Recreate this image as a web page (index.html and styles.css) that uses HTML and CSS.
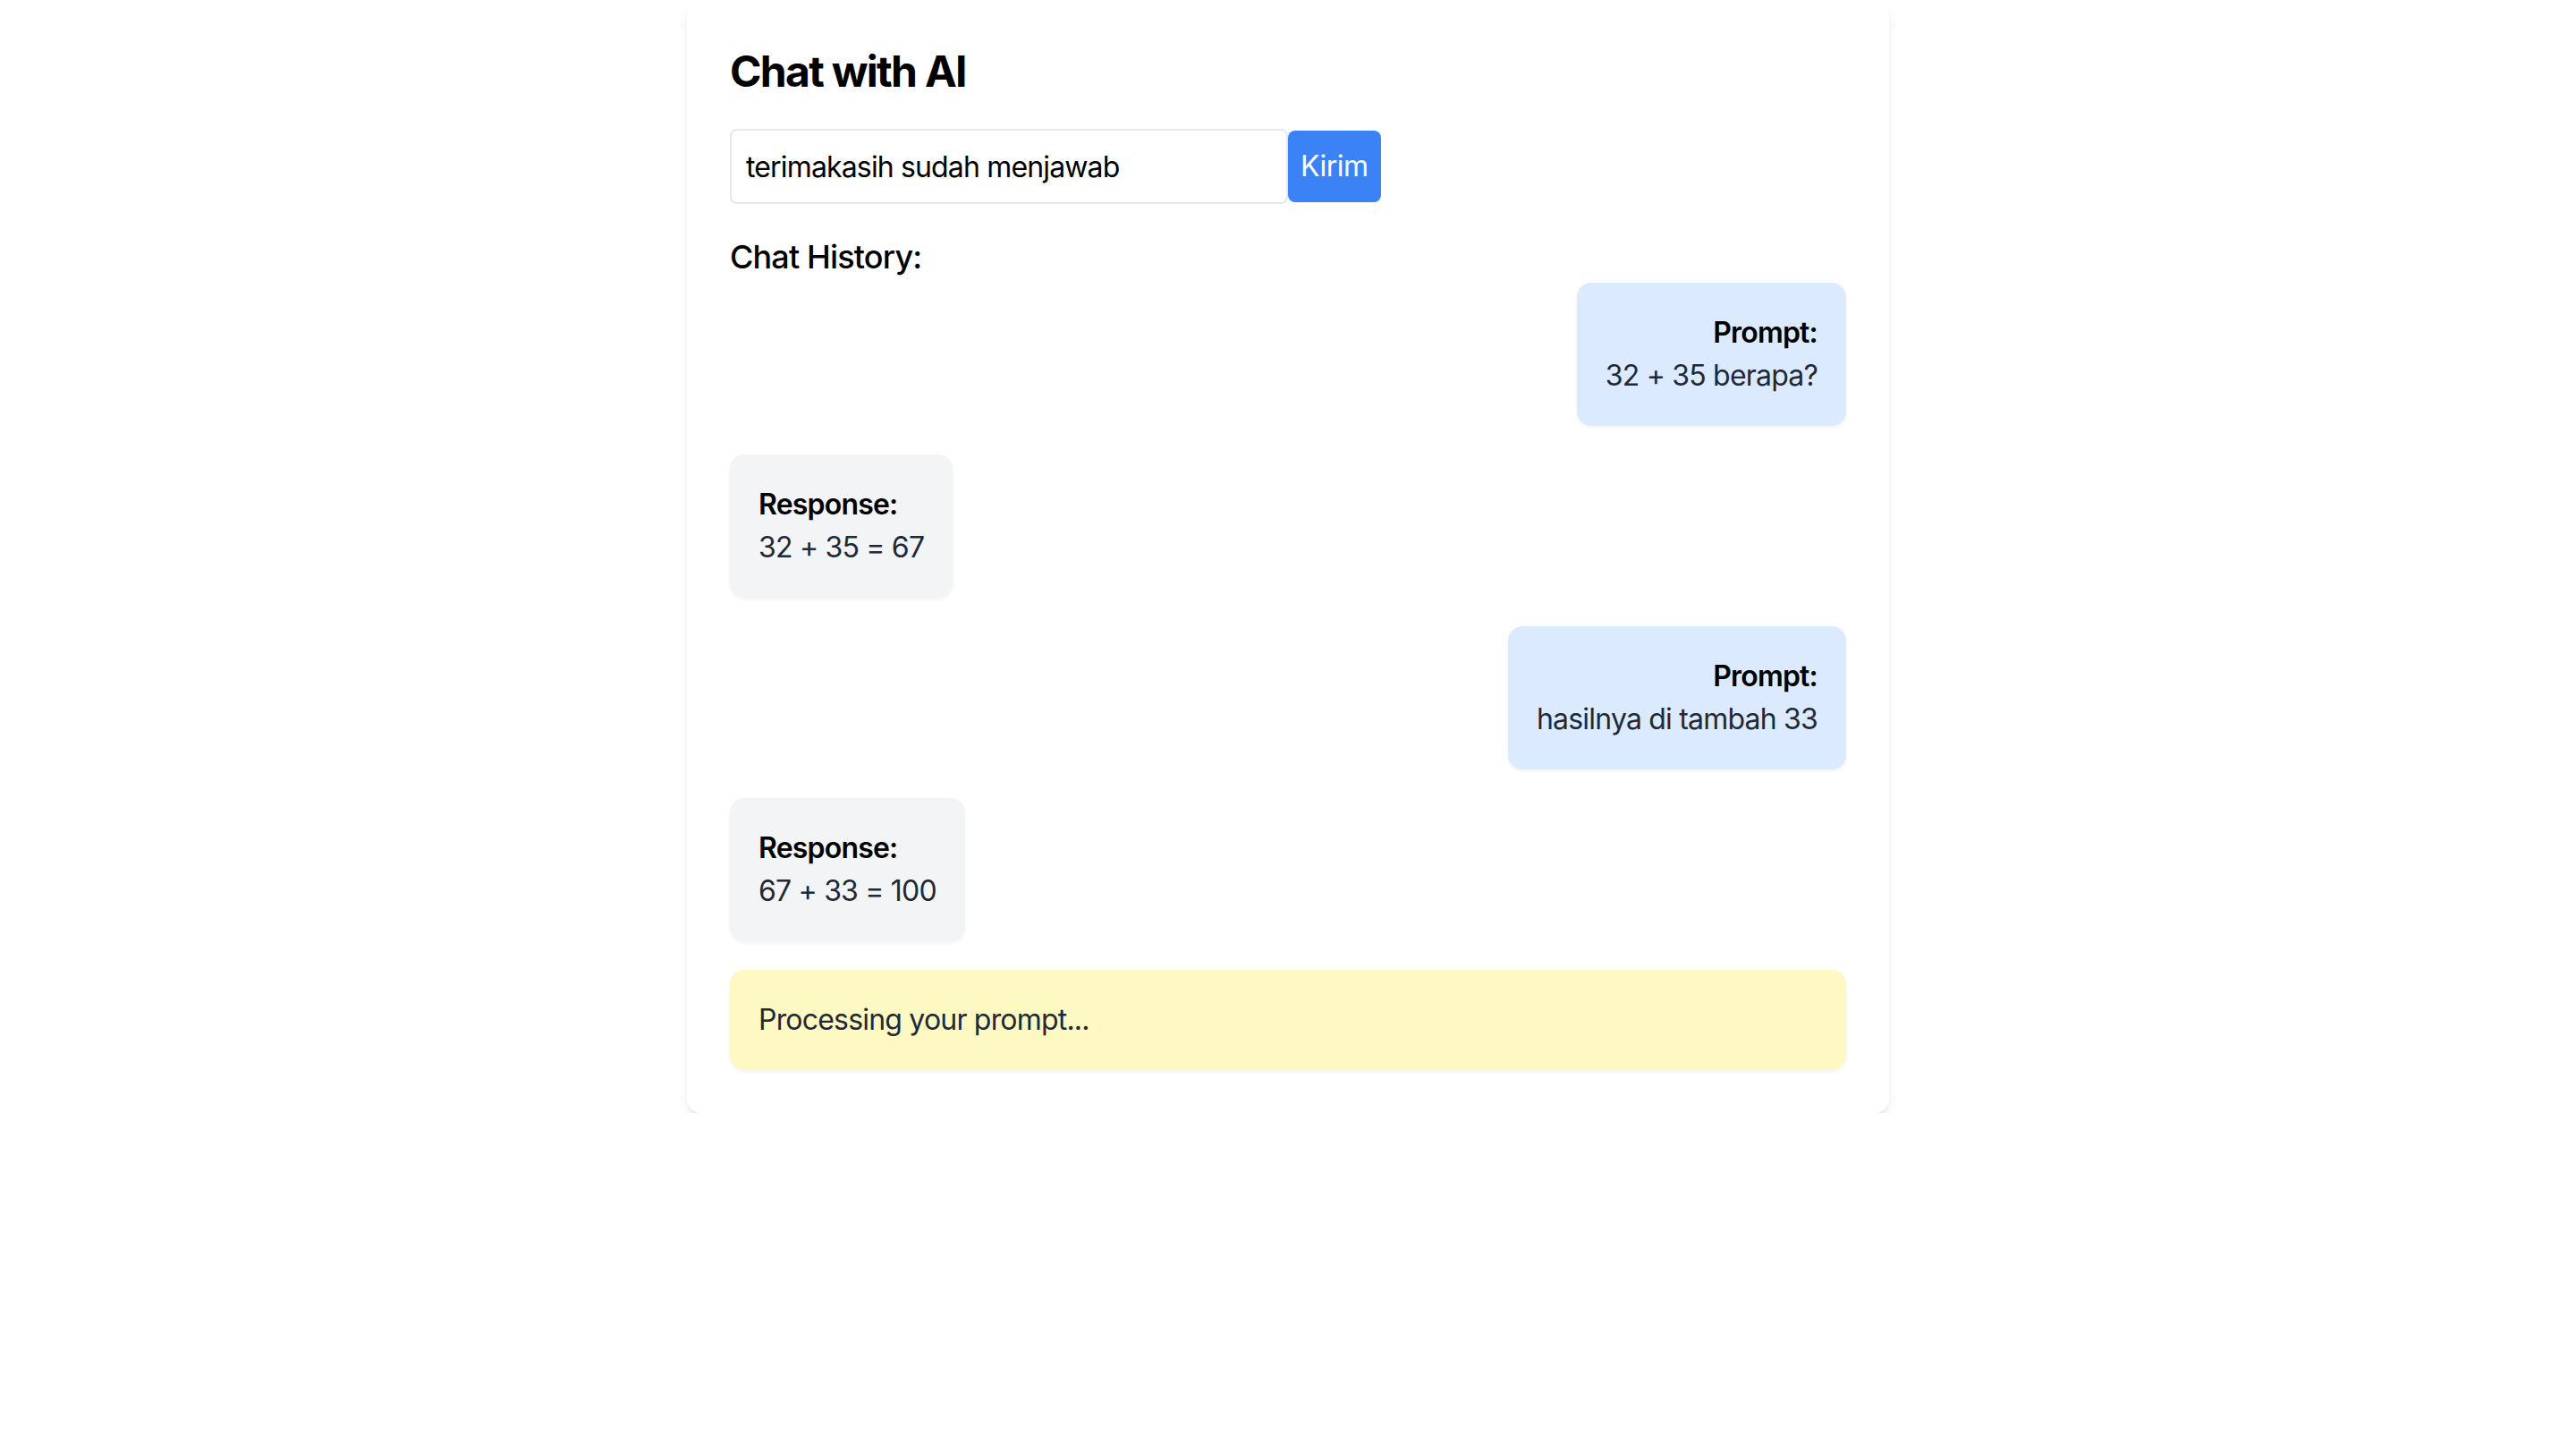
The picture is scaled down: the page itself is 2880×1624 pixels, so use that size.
FILE: index.html
```html
<!DOCTYPE html>
<html lang="id">
<head>
<meta charset="utf-8">
<title>Chat with AI</title>
<link rel="stylesheet" href="styles.css">
</head>
<body>
<div class="card">
  <h1 class="title">Chat with AI</h1>
  <div class="form-row">
    <input class="prompt-input" type="text" value="terimakasih sudah menjawab">
    <button class="send-btn">Kirim</button>
  </div>
  <h2 class="history-title">Chat History:</h2>
  <div class="history">
    <div class="bubble prompt">
      <div class="label">Prompt:</div>
      <div class="text">32 + 35 berapa?</div>
    </div>
    <div class="bubble response">
      <div class="label">Response:</div>
      <div class="text">32 + 35 = 67</div>
    </div>
    <div class="bubble prompt">
      <div class="label">Prompt:</div>
      <div class="text">hasilnya di tambah 33</div>
    </div>
    <div class="bubble response">
      <div class="label">Response:</div>
      <div class="text">67 + 33 = 100</div>
    </div>
    <div class="processing">Processing your prompt...</div>
  </div>
</div>
</body>
</html>
```
FILE: styles.css
```css
* { box-sizing: border-box; }
html, body { margin: 0; padding: 0; background: #ffffff; }
body {
  font-family: Inter, "Noto Sans", "Liberation Sans", sans-serif;
  color: #000;
}
.card {
  width: 1344px;
  margin: 0 auto;
  padding: 48px;
  background: #fff;
  border-radius: 16px;
  box-shadow: 0 8px 14px -3px rgba(0,0,0,0.10), 0 3px 8px -4px rgba(0,0,0,0.08);
}
.title {
  margin: 0 0 32px 0;
  font-size: 48px;
  line-height: 64px;
  font-weight: 700;
  letter-spacing: -1.7px;
}
.form-row {
  display: flex;
  align-items: center;
  margin-bottom: 31px;
}
.prompt-input {
  width: 624px;
  height: 84px;
  padding: 16px;
  font-family: inherit;
  font-size: 32px;
  line-height: 48px;
  letter-spacing: -0.85px;
  color: #000;
  border: 2px solid #e5e7eb;
  border-radius: 8px;
  outline: none;
  background: #fff;
}
.send-btn {
  height: 80px;
  padding: 16px 14px;
  font-family: inherit;
  font-size: 32px;
  line-height: 48px;
  letter-spacing: -0.5px;
  color: #fff;
  background: #3b82f6;
  border: none;
  border-radius: 8px;
}
.history-title {
  margin: 0;
  font-size: 36px;
  line-height: 56px;
  font-weight: 500;
  letter-spacing: -0.85px;
}
.history {
  display: flex;
  flex-direction: column;
  gap: 32px;
  margin-top: 1px;
}
.bubble {
  padding: 32px;
  border-radius: 16px;
  box-shadow: 0 2px 4px rgba(0,0,0,0.05);
  font-size: 32px;
  line-height: 48px;
  letter-spacing: -0.8px;
}
.bubble.prompt {
  align-self: flex-end;
  text-align: right;
  background: #dbeafe;
}
.bubble.response {
  align-self: flex-start;
  background: #f3f4f6;
}
.label {
  font-weight: 600;
  color: #000;
}
.text {
  color: #1f2937;
}
.processing {
  padding: 32px;
  border-radius: 16px;
  background: #fef9c3;
  color: #1f2937;
  font-size: 32px;
  line-height: 48px;
  letter-spacing: -0.8px;
  box-shadow: 0 2px 4px rgba(0,0,0,0.05);
}
```
